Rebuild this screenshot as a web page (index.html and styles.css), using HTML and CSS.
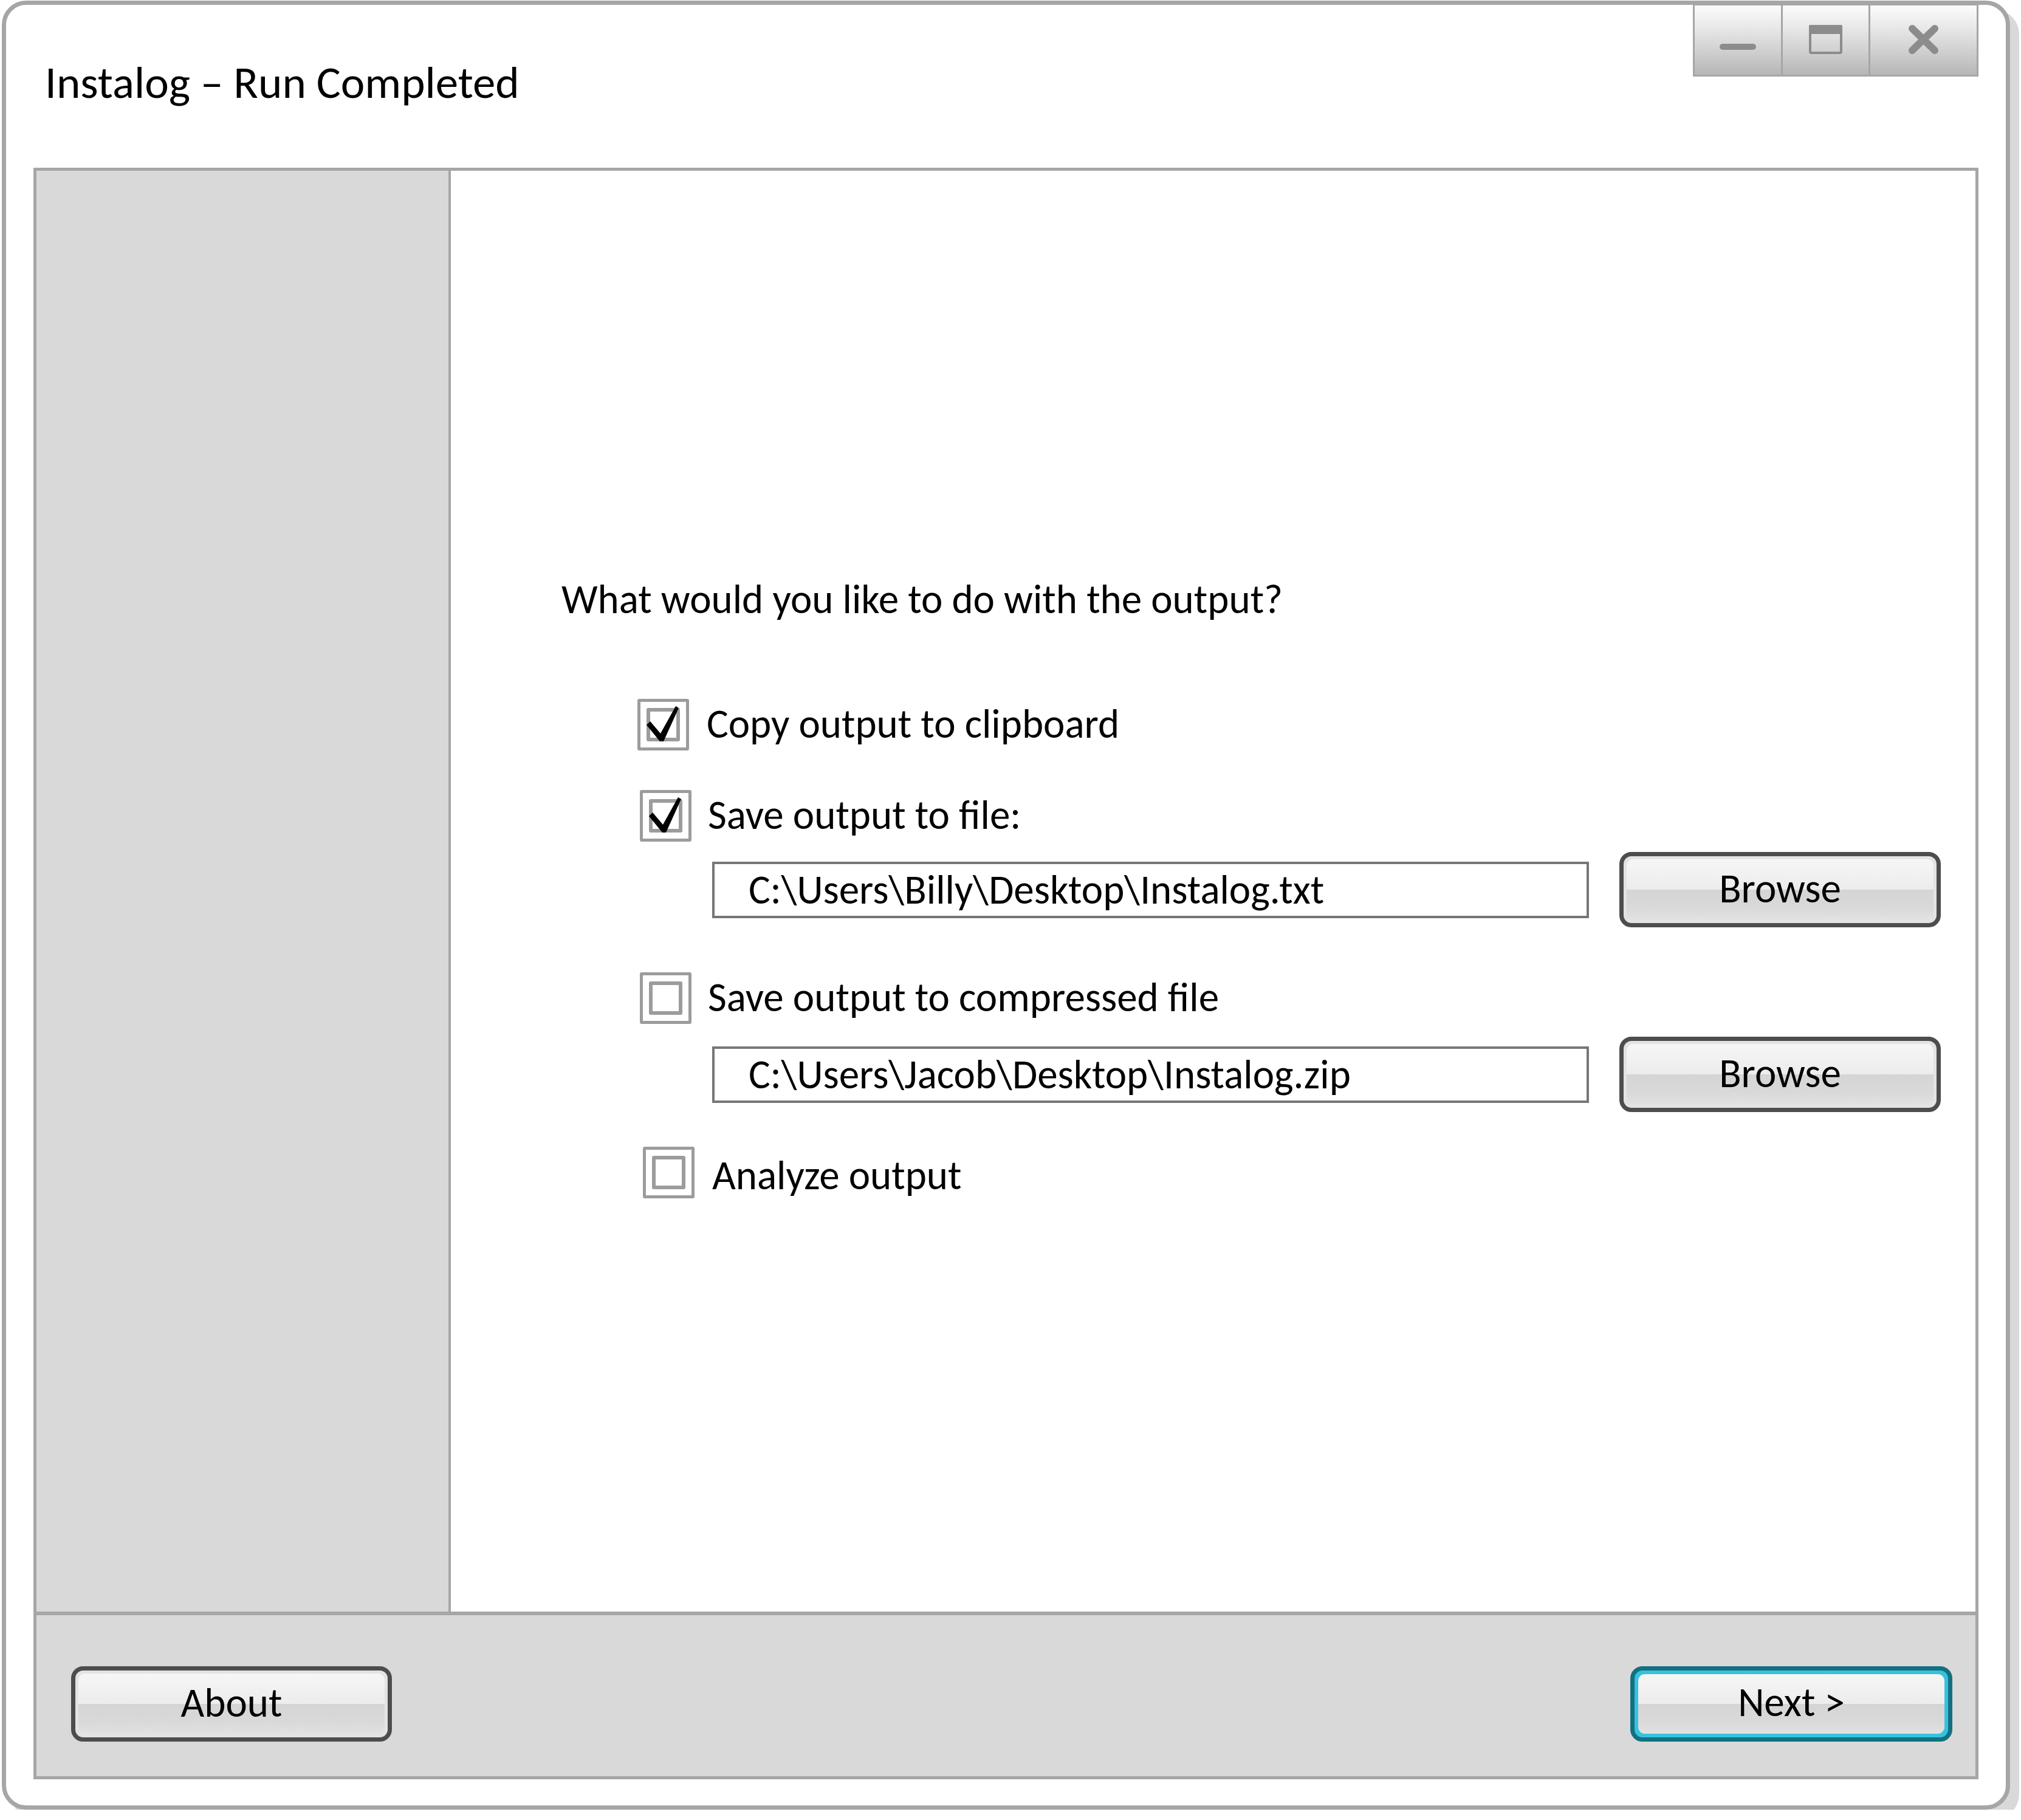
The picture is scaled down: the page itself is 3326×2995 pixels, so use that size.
FILE: index.html
```html
<!DOCTYPE html>
<html lang="en">
<head>
<meta charset="utf-8">
<title>Instalog – Run Completed</title>
<link rel="stylesheet" href="styles.css">
</head>
<body>
<div class="window">
  <header class="titlebar">
    <h1 class="title">Instalog – Run Completed</h1>
    <div class="win-controls">
      <button class="wc wc-min" aria-label="Minimize"><span class="min-bar"></span></button>
      <button class="wc wc-max" aria-label="Maximize">
        <svg class="wc-icon" width="55" height="48" viewBox="0 0 55 48"><rect x="2" y="2" width="51" height="44" rx="2" fill="none" stroke="#8c8c8c" stroke-width="4"/><rect x="0" y="0" width="55" height="15" rx="2" fill="#8c8c8c"/></svg>
      </button>
      <button class="wc wc-close" aria-label="Close">
        <svg class="wc-icon" width="49" height="48" viewBox="0 0 49 48"><path d="M6 6 L43 42 M43 6 L6 42" stroke="#8c8c8c" stroke-width="12" stroke-linecap="round" fill="none"/></svg>
      </button>
    </div>
  </header>
  <div class="panel">
    <div class="panel-body">
      <aside class="sidebar"></aside>
      <main class="content">
        <p class="question">What would you like to do with the output?</p>
        <div class="option opt-1">
          <span class="cb"><span class="cb-inner"></span><svg class="check" viewBox="0 0 85 85"><polygon points="15,43 21,37 38,57 63,12 68,15 43,70 37,70" fill="#000"/></svg></span>
          <span class="opt-label">Copy output to clipboard</span>
        </div>
        <div class="option opt-2">
          <span class="cb"><span class="cb-inner"></span><svg class="check" viewBox="0 0 85 85"><polygon points="15,43 21,37 38,57 63,12 68,15 43,70 37,70" fill="#000"/></svg></span>
          <span class="opt-label">Save output to file:</span>
        </div>
        <div class="file-row row-1">
          <div class="field">C:\Users\Billy\Desktop\Instalog.txt</div>
          <button class="btn"><span class="btn-face">Browse</span></button>
        </div>
        <div class="option opt-3">
          <span class="cb"><span class="cb-inner"></span></span>
          <span class="opt-label">Save output to compressed file</span>
        </div>
        <div class="file-row row-2">
          <div class="field">C:\Users\Jacob\Desktop\Instalog.zip</div>
          <button class="btn"><span class="btn-face">Browse</span></button>
        </div>
        <div class="option opt-4">
          <span class="cb"><span class="cb-inner"></span></span>
          <span class="opt-label">Analyze output</span>
        </div>
      </main>
    </div>
    <footer class="footer">
      <button class="btn btn-about"><span class="btn-face">About</span></button>
      <button class="btn btn-primary"><span class="btn-face">Next &gt;</span></button>
    </footer>
  </div>
</div>
</body>
</html>
```

FILE: styles.css
```css
* { box-sizing: border-box; }
html, body { margin: 0; padding: 0; background: #fff; }
body {
  font-family: Carlito, Calibri, "Open Sans", sans-serif;
  color: #000;
}
button { font-family: inherit; color: inherit; margin: 0; }

.window {
  width: 3305px;
  height: 2977px;
  margin: 1px 0 0 3px;
  border: 7px solid #a6a6a6;
  border-radius: 40px;
  box-shadow: 15px 15px 0 #d9d9d9;
  background: #fff;
  display: flex;
  flex-direction: column;
  padding: 0 45px 43px 45px;
}

.titlebar {
  height: 268px;
  flex: none;
  display: flex;
  justify-content: space-between;
  align-items: flex-start;
}
.title {
  margin: 90px 0 0 19px;
  font-size: 75px;
  font-weight: 400;
  line-height: 75px;
}
.win-controls {
  display: flex;
  margin-top: -2px;
}
.wc {
  height: 120px;
  border: 3px solid #a6a6a6;
  background: linear-gradient(#fcfcfc 0%, #e6e6e6 35%, #cdcdcd 70%, #b6b6b6 100%);
  padding: 0;
  display: flex;
  align-items: center;
  justify-content: center;
}
.wc-min { width: 148px; }
.wc-max { width: 147px; margin-left: -3px; }
.wc-close { width: 181px; margin-left: -3px; }
.min-bar {
  display: block;
  width: 60px;
  height: 10px;
  border-radius: 5px;
  background: #8c8c8c;
  margin-top: 22px;
}
.wc-icon { display: block; margin-top: -2px; }

.panel {
  height: 2652px;
  flex: none;
  border: 5px solid #a6a6a6;
  background: #d9d9d9;
  display: flex;
  flex-direction: column;
}
.panel-body {
  height: 2377px;
  flex: none;
  display: flex;
  border-bottom: 6px solid #a6a6a6;
}
.sidebar {
  width: 682px;
  flex: none;
  background: #d9d9d9;
  border-right: 4px solid #a6a6a6;
}
.content {
  flex: 1;
  background: #fff;
  padding: 665px 0 0 182px;
  display: flex;
  flex-direction: column;
  align-items: flex-start;
}
.question {
  margin: 0;
  font-size: 67px;
  line-height: 80px;
}

.option {
  display: flex;
  align-items: flex-start;
  gap: 27px;
  margin-left: 129px;
  height: 85px;
}
.opt-1 { margin-top: 124px; margin-left: 125px; gap: 29px; }
.opt-2 { margin-top: 65px; }
.opt-3 { margin-top: 74px; }
.opt-4 { margin-top: 57px; margin-left: 134px; gap: 29px; }
.opt-label {
  font-size: 67px;
  line-height: 85px;
  padding-top: 0;
  margin-top: -1px;
  white-space: nowrap;
}
.opt-4 .opt-label { margin-top: 5px; }
.cb {
  position: relative;
  flex: none;
  width: 85px;
  height: 85px;
  border: 5px solid #9c9c9c;
  border-radius: 3px;
  padding: 10px;
}
.cb-inner {
  display: block;
  width: 55px;
  height: 55px;
  border: 6px solid #9c9c9c;
  border-radius: 3px;
}
.check {
  position: absolute;
  left: -5px;
  top: -5px;
  width: 85px;
  height: 85px;
}

.file-row {
  display: flex;
  align-items: center;
  gap: 50px;
  margin-left: 248px;
}
.row-1 { margin-top: 17px; }
.row-2 { margin-top: 21px; }
.field {
  width: 1443px;
  height: 93px;
  border: 4px solid #767676;
  background: #fff;
  font-size: 67px;
  line-height: 83px;
  padding: 1px 0 0 56px;
  white-space: nowrap;
}

.btn {
  width: 529px;
  height: 124px;
  border: 7px solid #4d4d4d;
  border-radius: 20px;
  background: #e3e3e3;
  padding: 5px;
  font-size: 67px;
  display: block;
}
.btn-face {
  display: flex;
  align-items: center;
  justify-content: center;
  height: 100%;
  border-radius: 11px;
  padding-bottom: 3px;
  line-height: 67px;
  background: linear-gradient(#f6f6f6 0%, #f1f1f1 25%, #ececec 50%, #d5d5d5 50%, #d9d9d9 80%, #e2e2e2 100%);
}

.footer {
  flex: 1;
  display: flex;
  justify-content: space-between;
  align-items: flex-start;
  padding: 84px 38px 0 57px;
}
.btn-about { width: 528px; }
.btn-primary {
  width: 530px;
  border-color: #137080;
  background: #36c2de;
  padding: 6px;
}
.btn-primary .btn-face { padding-bottom: 5px; }
```
